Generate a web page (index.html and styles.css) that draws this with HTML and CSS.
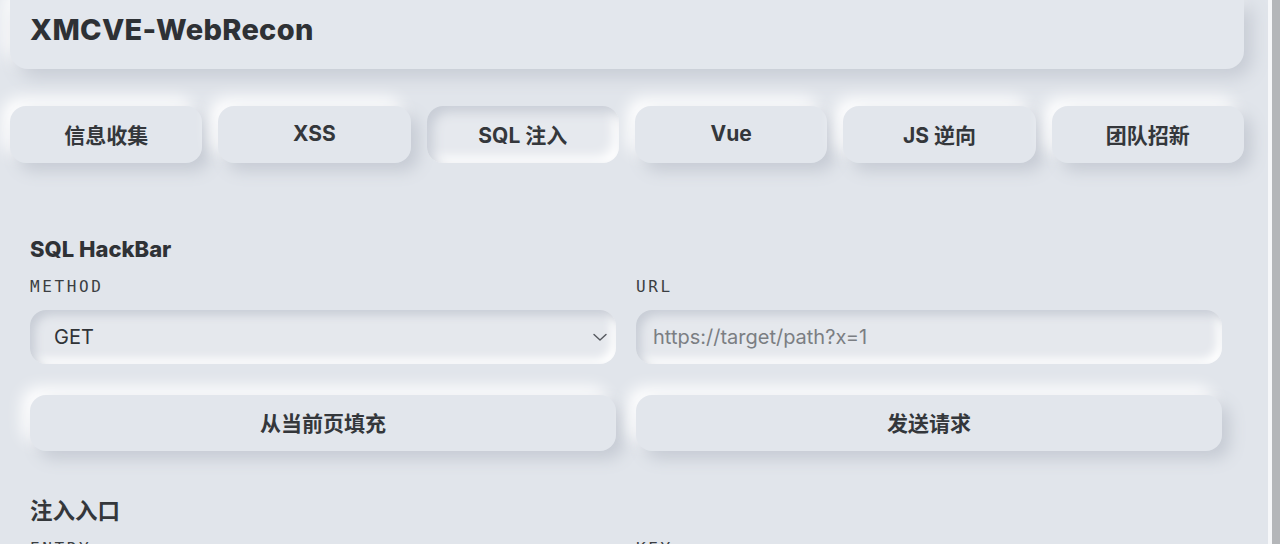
FILE: index.html
```html
<!DOCTYPE html>
<html lang="zh-CN">

<head>
    <meta charset="UTF-8">
    <meta name="viewport" content="width=device-width, initial-scale=1.0">
    <title>XMCVE-WebRecon</title>
    <link rel="stylesheet" href="styles.css">
</head>

<body>
    <div id="page">
        <div id="header">
            <h1>XMCVE-WebRecon</h1>
        </div>

        <div id="tabs">
            <button class="tab">信息收集</button>
            <button class="tab">XSS</button>
            <button class="tab active">SQL 注入</button>
            <button class="tab">Vue</button>
            <button class="tab">JS 逆向</button>
            <button class="tab">团队招新</button>
        </div>

        <div id="panel">
            <h2>SQL HackBar</h2>
            <div class="row">
                <div class="field">
                    <label>METHOD</label>
                    <div class="select">
                        <span>GET</span>
                        <svg width="16" height="16" viewBox="0 0 16 16">
                            <path d="M2 5.5 L8 11 L14 5.5" fill="none" stroke="#55585e" stroke-width="1.4" stroke-linecap="round" stroke-linejoin="round" />
                        </svg>
                    </div>
                </div>
                <div class="field">
                    <label>URL</label>
                    <input type="text" class="input" placeholder="https://target/path?x=1">
                </div>
            </div>
            <div class="row buttons">
                <button class="btn">从当前页填充</button>
                <button class="btn">发送请求</button>
            </div>

            <h3>注入入口</h3>
            <div class="row">
                <div class="field"><label>ENTRY</label></div>
                <div class="field"><label>KEY</label></div>
            </div>
        </div>
    </div>
    <!-- scrollbar strip -->
    <div id="scrollbar"></div>
</body>

</html>
```

FILE: styles.css
```css
body {
    font-family: Inter, "Noto Sans CJK SC", sans-serif;
    background-color: #e1e5eb;
    color: #2f3236;
    margin: 0;
    padding: 0;
    display: flex;
    height: 544px;
    overflow: hidden;
}

#page {
    flex: 1;
    padding: 0 24px 0 10px;
}

#scrollbar {
    width: 8px;
    border-left: 4px solid #f6f7f9;
    background-color: #b4b6b9;
}

#header {
    height: 69px;
    box-sizing: border-box;
    padding: 12px 20px 0;
    background-color: #e3e7ed;
    border-radius: 0 0 18px 18px;
    box-shadow: 8px 8px 18px #c6cbd4, -8px -8px 18px #ffffff;
}

h1 {
    margin: 0;
    font-size: 29px;
    line-height: 36px;
    font-weight: 800;
    letter-spacing: 0.3px;
    color: #2e3135;
}

#tabs {
    display: grid;
    grid-template-columns: repeat(6, 1fr);
    gap: 16px;
    margin-top: 37px;
}

.tab {
    height: 57px;
    padding-bottom: 3px;
    border: none;
    border-radius: 16px;
    background-color: #e2e6ec;
    font-family: Inter, "Noto Sans CJK SC", sans-serif;
    font-size: 21px;
    font-weight: 700;
    color: #34373b;
    box-shadow: 8px 8px 16px #c6cbd4, -8px -8px 16px #ffffff;
    cursor: pointer;
}

.tab.active {
    background-color: #e6e9ee;
    box-shadow: inset 6px 6px 12px #c8cdd6, inset -6px -6px 12px #ffffff;
}

#panel {
    padding: 0 22px 0 20px;
}

h2 {
    margin: 72px 0 0;
    font-size: 22px;
    line-height: 28px;
    font-weight: 800;
    color: #2f3236;
}

h3 {
    margin: 46px 0 0;
    font-size: 22.5px;
    line-height: 28px;
    font-weight: 600;
    color: #34373b;
}

.row {
    display: grid;
    grid-template-columns: 1fr 1fr;
    gap: 20px;
}

.field label {
    display: block;
    margin: 14px 0 13px;
    font-family: "DejaVu Sans Mono", monospace;
    font-size: 16px;
    line-height: 20px;
    letter-spacing: 2.6px;
    color: #3b3e42;
}

.select,
.input {
    height: 54px;
    box-sizing: border-box;
    width: 100%;
    border: none;
    border-radius: 16px;
    background-color: #e5e8ed;
    box-shadow: inset 5px 5px 10px #c8cdd6, inset -5px -5px 10px #ffffff;
    font-family: Inter, sans-serif;
    font-size: 20px;
    outline: none;
}

.select {
    display: flex;
    align-items: center;
    justify-content: space-between;
    padding: 0 8px 0 24px;
    color: #303337;
}

.input {
    padding: 0 17px;
    color: #303337;
}

.input::placeholder {
    color: #7b7e83;
}

.buttons {
    margin-top: 31px;
}

.btn {
    height: 56px;
    padding-bottom: 4px;
    border: none;
    border-radius: 16px;
    background-color: #e2e6ec;
    font-family: "Noto Sans CJK SC", sans-serif;
    font-size: 21px;
    font-weight: 700;
    color: #34373b;
    box-shadow: 8px 8px 16px #c6cbd4, -8px -8px 16px #ffffff;
    cursor: pointer;
}
```
